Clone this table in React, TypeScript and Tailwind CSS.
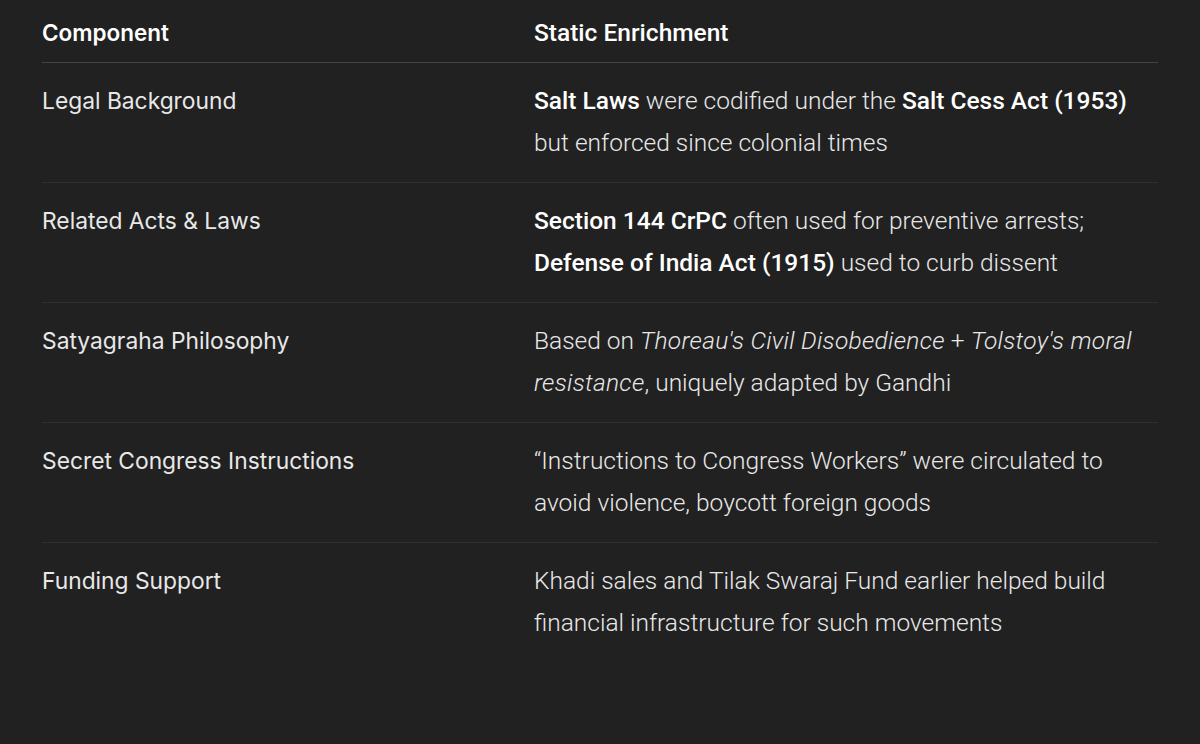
import React from "react";

const rows: { name: string; detail: React.ReactNode }[] = [
  {
    name: "Legal Background",
    detail: (
      <>
        <strong className="font-medium text-white">Salt Laws</strong> were codified under the{" "}
        <strong className="font-medium text-white">Salt Cess Act (1953)</strong> but enforced since colonial times
      </>
    ),
  },
  {
    name: "Related Acts & Laws",
    detail: (
      <>
        <strong className="font-medium text-white">Section 144 CrPC</strong> often used for preventive arrests;{" "}
        <strong className="font-medium text-white">Defense of India Act (1915)</strong> used to curb dissent
      </>
    ),
  },
  {
    name: "Satyagraha Philosophy",
    detail: (
      <>
        Based on <em className="tracking-[0.3px]">Thoreau's Civil Disobedience</em> +{" "}
        <em className="tracking-[0.3px]">Tolstoy's moral resistance</em>, uniquely adapted by Gandhi
      </>
    ),
  },
  {
    name: "Secret Congress Instructions",
    detail: <>“Instructions to Congress Workers” were circulated to avoid violence, boycott foreign goods</>,
  },
  {
    name: "Funding Support",
    detail: <>Khadi sales and Tilak Swaraj Fund earlier helped build financial infrastructure for such movements</>,
  },
];

export default function App() {
  return (
    <div className="min-h-[744px] bg-[#212121] px-[42px] text-[#e8e8e8]">
      <table className="w-[1116px] border-collapse text-left">
        <thead>
          <tr className="border-b border-[#454545]">
            <th className="w-[492px] pt-[12px] pb-[8px] font-['Inter',sans-serif] text-[22.5px] font-semibold leading-[42px] text-white">
              Component
            </th>
            <th className="pt-[12px] pb-[8px] font-['Roboto',sans-serif] text-[24.5px] font-medium leading-[42px] text-white">
              Static Enrichment
            </th>
          </tr>
        </thead>
        <tbody>
          {rows.map((row, i) => (
            <tr key={row.name} className={i < rows.length - 1 ? "border-b border-[#2e2e2e]" : ""}>
              <td className="pt-[17px] pb-[18px] align-top font-['Inter',sans-serif] text-[22.8px] font-normal leading-[42px]">
                {row.name}
              </td>
              <td className="pt-[17px] pb-[18px] align-top font-['Roboto',sans-serif] text-[24.5px] font-light leading-[42px]">
                {row.detail}
              </td>
            </tr>
          ))}
        </tbody>
      </table>
    </div>
  );
}
